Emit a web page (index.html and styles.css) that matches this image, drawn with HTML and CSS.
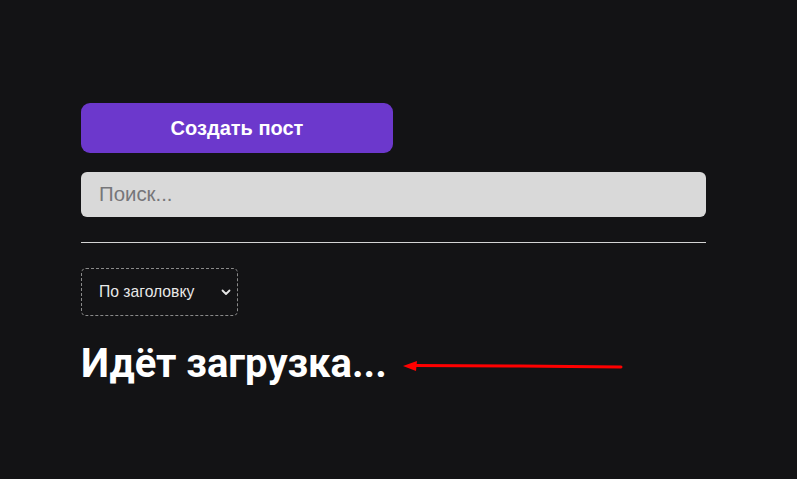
FILE: index.html
```html
<!DOCTYPE html>
<html lang="ru">
<head>
<meta charset="utf-8">
<link rel="stylesheet" href="styles.css">
</head>
<body>
<main class="page">
  <button class="create-btn">Создать пост</button>
  <div class="search">Поиск...</div>
  <hr class="divider">
  <div class="sort">
    <span>По заголовку</span>
    <svg class="chev" width="10" height="7" viewBox="0 0 10 7"><path d="M1.5 1.5 L5 5 L8.5 1.5" fill="none" stroke="#e6e6e6" stroke-width="1.8" stroke-linecap="round" stroke-linejoin="round"/></svg>
  </div>
  <h1 class="loading">Идёт загрузка...</h1>
</main>
<svg class="arrow" width="797" height="479" viewBox="0 0 797 479">
  <path d="M414 365.5 L520 366 L621 367" fill="none" stroke="#ff0000" stroke-width="3" stroke-linecap="round"/>
  <path d="M403 366 L417 361 L416 371 Z" fill="#ff0000"/>
</svg>
</body>
</html>
```
FILE: styles.css
```css
html, body {
  margin: 0;
  padding: 0;
  background: #131315;
  height: 100%;
}
body {
  font-family: "Liberation Sans", Arial, sans-serif;
  position: relative;
}
.page {
  width: 625px;
  padding: 103px 0 0 81px;
  display: flex;
  flex-direction: column;
  align-items: flex-start;
}
.create-btn {
  width: 312px;
  height: 50px;
  border: none;
  border-radius: 9px;
  background: #6c38cc;
  color: #ffffff;
  font-family: "Liberation Sans", Arial, sans-serif;
  font-weight: bold;
  font-size: 20px;
  padding: 0;
}
.search {
  margin-top: 19px;
  width: 625px;
  height: 45px;
  box-sizing: border-box;
  background: #d9d9d9;
  border-radius: 6px;
  padding: 0 18px;
  display: flex;
  align-items: center;
  color: #767679;
  font-size: 20.4px;
}
.divider {
  margin: 25px 0 0 0;
  width: 625px;
  height: 0;
  border: none;
  border-top: 1px solid #d4d4d4;
}
.sort {
  margin-top: 25px;
  width: 157px;
  height: 48px;
  box-sizing: border-box;
  border: 1px dashed #8a8a8a;
  border-radius: 5px;
  display: flex;
  align-items: center;
  padding: 0 0 0 17px;
  color: #e8e8e8;
  font-size: 15.7px;
}
.sort span {
  flex: 1;
}
.chev {
  margin-right: 6px;
}
.loading {
  margin: 25px 0 0 0;
  font-family: Roboto, "Liberation Sans", sans-serif;
  font-weight: 700;
  font-size: 40px;
  color: #ffffff;
  line-height: 46px;
}
.arrow {
  position: absolute;
  left: 0;
  top: 0;
  pointer-events: none;
}
```
